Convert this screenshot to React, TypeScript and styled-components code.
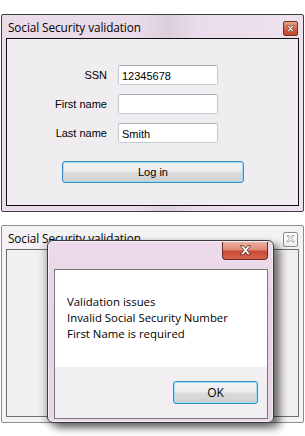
import React from 'react'
import styled, { createGlobalStyle } from 'styled-components'

const GlobalStyle = createGlobalStyle`
    html, body {
        margin:0;
        padding:0;
        background:#ffffff;
    }
    body {
        width:305px;
        height:436px;
        overflow:hidden;
    }
`

const CloseGlyph = ({ color = '#fff', stroke = '#4a2a22', size = 10 }: { color?: string, stroke?: string, size?: number }) => (
    <svg width={size} height={size * 0.8} viewBox="0 0 10 8">
        <path d="M1 0.5 L3.3 0.5 L5 2.6 L6.7 0.5 L9 0.5 L6.2 4 L9 7.5 L6.7 7.5 L5 5.4 L3.3 7.5 L1 7.5 L3.8 4 Z"
            fill={color} stroke={stroke} strokeWidth="0.6" strokeLinejoin="round" />
    </svg>
)

export default function App() {
    return (
        <Page>
            <GlobalStyle />
            <Window $active>
                <TitleBar>
                    <Title>Social Security validation</Title>
                    <SmallClose $active><CloseGlyph size={9} /></SmallClose>
                </TitleBar>
                <Client>
                    <Form>
                        <Label>SSN</Label>
                        <Field defaultValue="12345678" readOnly />
                        <Label>First name</Label>
                        <Field defaultValue="" readOnly />
                        <Label>Last name</Label>
                        <Field defaultValue="Smith" readOnly />
                    </Form>
                    <LoginButton>Log in</LoginButton>
                </Client>
            </Window>

            <Window>
                <TitleBar>
                    <Title>Social Security validation</Title>
                    <SmallClose><CloseGlyph size={9} color="#fff" stroke="#6a6a6a" /></SmallClose>
                </TitleBar>
                <Client $inactive />
            </Window>

            <Dialog>
                <RedClose><CloseGlyph size={13} /></RedClose>
                <DialogBody>
                    <Message>
                        <p>Validation issues</p>
                        <p>Invalid Social Security Number</p>
                        <p>First Name is required</p>
                    </Message>
                    <Footer>
                        <OkButton>OK</OkButton>
                    </Footer>
                </DialogBody>
            </Dialog>
        </Page>
    )
}

const Page = styled.main`
    position:relative;
    width:305px;
    height:436px;
    padding-top:14px;
    box-sizing:border-box;
    display:flex;
    flex-direction:column;
    gap:13px;
`

const Window = styled.section<{ $active?: boolean }>`
    margin-left:1px;
    width:303px;
    height:198px;
    box-sizing:border-box;
    display:flex;
    flex-direction:column;
    border:1px solid ${p => p.$active ? '#3e3e3e' : '#8c8c8c'};
    border-radius:2px;
    background:${p => p.$active
        ? 'linear-gradient(90deg, #ecdcea 0%, #e9dbe9 45%, #dccfdc 55%, #eadcea 65%, #eee2ee 100%)'
        : '#f5f2f5'};
    padding:0 4px 5px 4px;
`

const TitleBar = styled.div`
    height:23px;
    display:flex;
    align-items:center;
    justify-content:space-between;
    padding:0 1px 0 2px;
`

const Title = styled.span`
    font-family:'Open Sans', 'Noto Sans', sans-serif;
    font-size:11.8px;
    color:#000;
    letter-spacing:-0.1px;
`

const SmallClose = styled.div<{ $active?: boolean }>`
    width:15px;
    height:15px;
    box-sizing:border-box;
    display:flex;
    align-items:center;
    justify-content:center;
    margin-top:${p => p.$active ? '4px' : '3px'};
    border:1px solid ${p => p.$active ? '#6b3526' : '#8a8a8a'};
    border-radius:2px;
    background:${p => p.$active
        ? 'linear-gradient(#e6a48e, #d0674c 50%, #c0472c)'
        : 'linear-gradient(#ffffff, #eeeeee)'};
`

const Client = styled.div<{ $inactive?: boolean }>`
    flex:1;
    border:1px solid ${p => p.$inactive ? '#6e6e6e' : '#101010'};
    background:${p => p.$inactive ? '#f2eff2' : '#f0edf0'};
    display:flex;
    flex-direction:column;
`

const Form = styled.div`
    display:grid;
    grid-template-columns:87px 100px;
    column-gap:11px;
    row-gap:9px;
    padding:26px 0 0 13px;
`

const Label = styled.label`
    font-family:'Liberation Sans', Arial, sans-serif;
    font-size:11px;
    color:#000;
    text-align:right;
    line-height:16px;
    padding-top:2px;
`

const Field = styled.input`
    width:100px;
    height:20px;
    box-sizing:border-box;
    border:1px solid #c5cad2;
    border-top-color:#a9adb5;
    border-radius:2px;
    background:#fff;
    padding:2px 0 0 3px;
    font-family:'Liberation Sans', Arial, sans-serif;
    font-size:11px;
    color:#000;
    outline:none;
`

const LoginButton = styled.button`
    margin:18px 0 0 55px;
    width:182px;
    height:22px;
    box-sizing:border-box;
    border:1px solid #3c8dc0;
    border-radius:3px;
    box-shadow:inset 0 0 0 1px #9ddcf6;
    background:linear-gradient(#f3f3f3 0%, #ececec 48%, #dcdcdc 52%, #cfcfcf 100%);
    font-family:'Liberation Sans', Arial, sans-serif;
    font-size:11px;
    color:#000;
    padding:0;
`

const Dialog = styled.div`
    position:absolute;
    left:47px;
    top:240px;
    width:227px;
    height:183px;
    box-sizing:border-box;
    border:1px solid #3a3a3a;
    border-radius:6px;
    background:linear-gradient(180deg, #eddbeb 0%, #e6d3e4 40%, #e9d8e7 100%);
    box-shadow:0 0 0 1px rgba(255,255,255,0.5) inset, 6px 5px 8px rgba(0,0,0,0.55), -3px 2px 6px rgba(0,0,0,0.2);
    padding:28px 5px 3px 6px;
    display:flex;
`

const RedClose = styled.div`
    position:absolute;
    top:1px;
    right:5px;
    width:46px;
    height:18px;
    box-sizing:border-box;
    display:flex;
    align-items:center;
    justify-content:center;
    border:1px solid #6a2a20;
    border-top:none;
    border-radius:0 0 4px 4px;
    background:linear-gradient(#eab2a4 0%, #de8a76 45%, #c74a36 55%, #d8634c 100%);
`

const DialogBody = styled.div`
    flex:1;
    border:1px solid #7a7a7a;
    display:flex;
    flex-direction:column;
`

const Message = styled.div`
    height:97px;
    box-sizing:border-box;
    background:#fff;
    padding:24px 0 0 12px;
    font-family:'Open Sans', 'Noto Sans', sans-serif;
    font-size:11.4px;
    line-height:16px;
    color:#000;
    p {
        margin:0;
    }
`

const Footer = styled.div`
    flex:1;
    background:#f0eef0;
    display:flex;
    justify-content:flex-end;
    align-items:flex-start;
    padding:14px 9px 0 0;
`

const OkButton = styled.button`
    width:85px;
    height:23px;
    box-sizing:border-box;
    border:1px solid #3c8dc0;
    border-radius:3px;
    box-shadow:inset 0 0 0 1px #9ddcf6;
    background:linear-gradient(#f3f3f3 0%, #ececec 48%, #dcdcdc 52%, #cfcfcf 100%);
    font-family:'Open Sans', 'Noto Sans', sans-serif;
    font-size:12px;
    color:#000;
    padding:0;
`
